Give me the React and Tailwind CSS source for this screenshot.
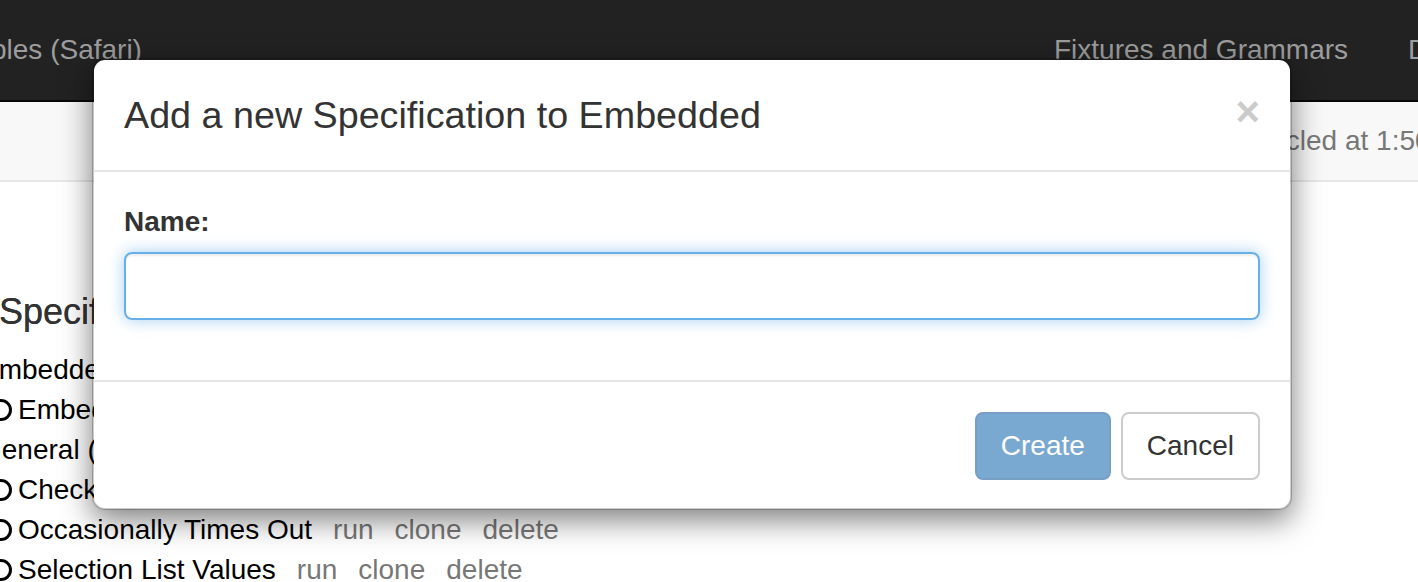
import React from 'react';

const rows = [
    { kind: 'group', text: 'Embedded (1)' },
    { kind: 'spec', text: 'Embedded Spec' },
    { kind: 'group', text: 'General (7)' },
    { kind: 'spec', text: 'Check Properties' },
    { kind: 'spec', text: 'Occasionally Times Out', links: true },
    { kind: 'spec', text: 'Selection List Values', links: true },
];

function Circle() {
    return <span className="inline-block w-[22px] h-[22px] rounded-full border-[3px] border-black -ml-[10px] mr-[6px] shrink-0" />;
}

function SpecRow({ row }) {
    if (row.kind === 'group') {
        return <div className="h-[40px] leading-[40px] -ml-[20px] whitespace-nowrap">{row.text}</div>;
    }
    return (
        <div className="h-[40px] flex items-center whitespace-nowrap">
            <Circle />
            <span>{row.text}</span>
            {row.links && (
                <span className="text-[#777] ml-[21px] flex gap-[21px]">
                    <span>run</span>
                    <span>clone</span>
                    <span>delete</span>
                </span>
            )}
        </div>
    );
}

export default function App() {
    return (
        <div className="relative w-[1418px] h-[582px] overflow-hidden bg-white font-['Liberation_Sans','Helvetica_Neue',Arial,sans-serif] text-[28px]">
            {/* Navbar */}
            <div className="h-[102px] bg-[#222] border-b-2 border-[#080808] flex items-center whitespace-nowrap text-[#9d9d9d] leading-[40px] overflow-hidden">
                <div className="w-[1054px] shrink-0 -ml-[9px] pr-[9px] box-content">ples (Safari)</div>
                <div className="shrink-0">Fixtures and Grammars</div>
                <div className="shrink-0 ml-[60px]">Documentation</div>
            </div>

            {/* Status bar */}
            <div className="h-[80px] bg-[#f8f8f8] border-b-2 border-[#e7e7e7] flex items-center whitespace-nowrap text-[#777]">
                <div className="ml-[1222px] shrink-0">Recycled at 1:50:23 PM</div>
            </div>

            {/* Spec list */}
            <div className="pt-[110px] text-black">
                <h2 className="text-[36px] leading-[40px] font-medium text-[#333] -ml-[1px] mb-[18px] whitespace-nowrap [text-shadow:0_0_0.6px_#333]">Specifications</h2>
                {rows.map((row) => (
                    <SpecRow key={row.text} row={row} />
                ))}
            </div>

            {/* Modal */}
            <div className="absolute left-[92px] top-[58px] w-[1200px] bg-white bg-clip-padding border-2 border-black/20 rounded-[13px] shadow-[0_10px_30px_rgba(0,0,0,0.5)]">
                <div className="flex items-center justify-between px-[30px] py-[30px] border-b-2 border-[#e5e5e5]">
                    <h4 className="text-[37.7px] leading-[50px] text-[#333] font-normal whitespace-nowrap">Add a new Specification to Embedded</h4>
                    <button className="text-[42px] leading-none font-bold text-black opacity-20 -mt-[6px]">×</button>
                </div>
                <div className="px-[30px] py-[30px]">
                    <label className="block font-bold text-[#333] leading-[40px] mb-[10px]">Name:</label>
                    <input
                        type="text"
                        className="block w-full h-[68px] px-[24px] rounded-[8px] border-2 border-[#66afe9] outline-none shadow-[inset_0_2px_2px_rgba(0,0,0,0.075),0_0_16px_rgba(102,175,233,0.6)]"
                    />
                    <div className="h-[30px]" />
                </div>
                <div className="flex justify-end gap-[10px] px-[30px] pt-[30px] pb-[28px] border-t-2 border-[#e5e5e5]">
                    <button className="h-[68px] px-[24px] rounded-[8px] border-2 border-[#2e6da4] bg-[#337ab7] text-white opacity-65 leading-[40px]">Create</button>
                    <button className="h-[68px] px-[24px] rounded-[8px] border-2 border-[#ccc] bg-white text-[#333] leading-[40px]">Cancel</button>
                </div>
            </div>
        </div>
    );
}
